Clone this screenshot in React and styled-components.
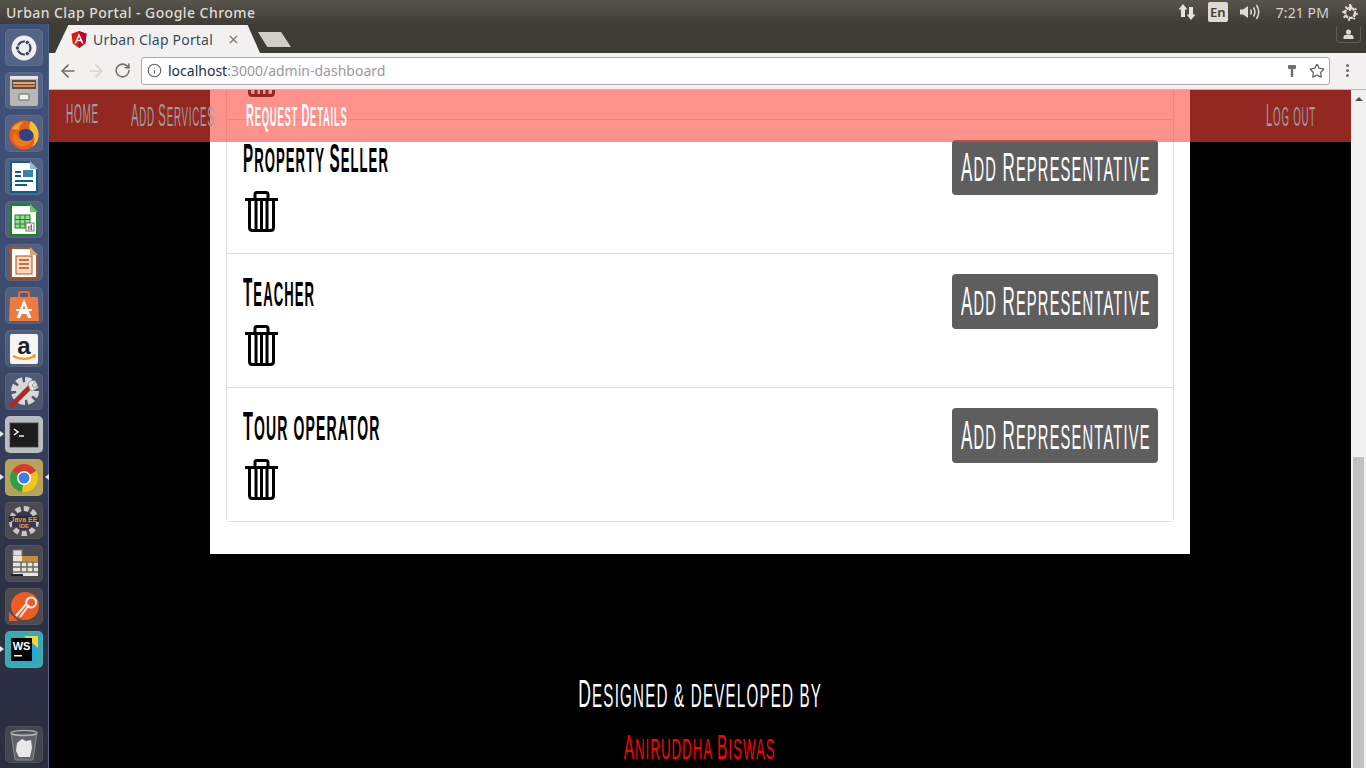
import React from "react";
import styled, { createGlobalStyle } from "styled-components";
import { ArrowLeft, ArrowRight, RotateCw, Info, Star, X } from "lucide-react";

const GlobalStyle = createGlobalStyle`
  html, body { margin: 0; padding: 0; height: 100%; overflow: hidden; background: #000; }
  #root { height: 100%; }
  * { box-sizing: border-box; }
`;

const Desktop = styled.div`
  width: 1366px;
  height: 768px;
  display: flex;
  flex-direction: column;
  overflow: hidden;
  font-family: "Noto Sans", sans-serif;
`;

const TopBar = styled.div`
  height: 24px;
  flex: none;
  display: flex;
  align-items: center;
  padding: 0 7px 0 6px;
  background: linear-gradient(#57544b, #3f3d37);
  color: #dfdbd2;
  font-size: 14px;
  font-weight: 500;
  letter-spacing: 0.44px;
`;

const TopTitle = styled.div`
  flex: 1;
  white-space: nowrap;
`;

const Tray = styled.div`
  display: flex;
  align-items: center;
  height: 24px;
  color: #dfdbd2;
`;

const EnBadge = styled.div`
  width: 20px;
  height: 20px;
  margin: 0 11px 0 12px;
  border-radius: 2px;
  background: #dfdbd2;
  color: #3f3d37;
  font-size: 13px;
  font-weight: 600;
  letter-spacing: 0;
  display: flex;
  align-items: center;
  justify-content: center;
`;

const Clock = styled.div`
  font-size: 14px;
  font-weight: 400;
  margin: 0 12px 0 15px;
  letter-spacing: 0.1px;
  white-space: nowrap;
  color: #d5d3cd;
`;

const Main = styled.div`
  flex: 1;
  min-height: 0;
  display: flex;
`;

const Launcher = styled.div`
  width: 49px;
  flex: none;
  padding: 5px 0 5px 5px;
  display: flex;
  flex-direction: column;
  gap: 6px;
  background: linear-gradient(#3f5279 0%, #3c4a6c 42%, #2e3246 72%, #2b2e3f 100%);
  border-right: 1px solid #4e6592;
`;

const Tile = styled.div`
  position: relative;
  width: 38px;
  height: 37px;
  flex: none;
  border-radius: 5px;
  display: flex;
  align-items: center;
  justify-content: center;
  background: ${(p) => p.$bg || "rgba(255,255,255,0.11)"};
  box-shadow: inset 0 0 0 1px rgba(255, 255, 255, 0.06);
  ${(p) => p.$running && `
    &::before {
      content: "";
      position: absolute;
      left: -5px;
      top: 15px;
      border: 3.5px solid transparent;
      border-left: 4px solid #dfe3ea;
    }
  `}
  ${(p) => p.$active && `
    &::after {
      content: "";
      position: absolute;
      right: -6px;
      top: 15px;
      border: 3.5px solid transparent;
      border-right: 4px solid #dfe3ea;
    }
  `}
`;

const Spacer = styled.div`
  flex: 1;
`;

const Browser = styled.div`
  flex: 1;
  min-width: 0;
  display: flex;
  flex-direction: column;
`;

const TabStrip = styled.div`
  height: 29px;
  flex: none;
  position: relative;
  display: flex;
  align-items: flex-end;
  padding-left: 6px;
  background: #3e3c36;
`;

const Tab = styled.div`
  width: 205px;
  height: 28px;
  flex: none;
  display: flex;
  align-items: center;
  padding: 0 20px 0 16px;
  background: #f2f1f0;
  clip-path: polygon(0 100%, 6.5% 0, 94% 0, 100% 100%);
  color: #3b4a5c;
  font-size: 14px;
  letter-spacing: 0.2px;
  gap: 6px;
`;

const TabTitle = styled.span`
  flex: 1;
  white-space: nowrap;
`;

const NewTab = styled.div`
  width: 33px;
  height: 15px;
  margin: 0 0 6px -2px;
  background: #cfcec9;
  clip-path: polygon(0 0, 70% 0, 100% 100%, 28% 100%);
`;

const UserChip = styled.div`
  position: absolute;
  top: 2px;
  right: 5px;
  width: 25px;
  height: 17px;
  border: 1px solid #5d5b54;
  border-top: none;
  border-radius: 0 0 4px 4px;
  display: flex;
  align-items: center;
  justify-content: center;
`;

const Toolbar = styled.div`
  height: 37px;
  flex: none;
  display: flex;
  align-items: center;
  padding: 0 0 1px 9px;
  gap: 8px;
  background: #f2f1f0;
  border-bottom: 1px solid #b8b8b8;
  color: #6e6e6e;
`;

const AddressBar = styled.div`
  width: 1189px;
  height: 28px;
  margin-left: 2px;
  display: flex;
  align-items: center;
  gap: 5px;
  padding: 0 4px 0 5px;
  background: #fff;
  border: 1px solid #a9a9a9;
  border-radius: 3px;
  font-size: 14px;
  color: #9a9a9a;
`;

const Host = styled.span`
  color: #20303f;
`;

const Url = styled.div`
  flex: 1;
  white-space: nowrap;
  padding-left: 1px;
`;

const Kebab = styled.div`
  width: 3px;
  margin-left: 8px;
  display: flex;
  flex-direction: column;
  gap: 2px;
  & > i {
    display: block;
    width: 3px;
    height: 3px;
    border-radius: 50%;
    background: #6e6e6e;
  }
`;

const Viewport = styled.div`
  flex: 1;
  min-height: 0;
  display: flex;
`;

const PageClip = styled.div`
  position: relative;
  flex: 1;
  min-width: 0;
  overflow: hidden;
  display: flex;
  flex-direction: column;
  justify-content: flex-end;
  background: #000;
`;

const NavBar = styled.nav`
  position: absolute;
  top: 0;
  left: 0;
  right: 0;
  height: 52px;
  z-index: 5;
  display: flex;
  align-items: center;
  padding: 0 35px 4px 17px;
  gap: 32px;
  background: rgba(251, 66, 56, 0.585);
`;

const NavLink = styled.div`
  width: ${(p) => p.$w}px;
  height: 28px;
  overflow: visible;
  color: ${(p) => (p.$on ? "#fff" : "#9d9d9d")};
  font-weight: ${(p) => (p.$on ? 700 : 400)};
  margin-left: ${(p) => (p.$right ? "auto" : 0)};
`;

const Panel = styled.div`
  width: 980px;
  flex: none;
  margin-left: 161px;
  padding: 0 16px 32px;
  background: #fff;
`;

const ServiceList = styled.div`
  border: 1px solid #ddd;
  border-radius: 0 0 4px 4px;
`;

const ServiceRow = styled.div`
  height: 134px;
  padding: 18px 15px 0 16px;
  display: flex;
  justify-content: space-between;
  align-items: flex-start;
  background: #fff;
  & + & { border-top: 1px solid #ddd; }
`;

const ServiceInfo = styled.div`
  display: flex;
  flex-direction: column;
`;

const ServiceName = styled.div`
  height: 32px;
  color: #000;
  font-weight: 700;
  margin-bottom: 21px;
`;

const TrashBtn = styled.div`
  width: 36px;
  height: 42px;
  margin-left: 2px;
  color: #000;
`;

const RepButton = styled.div`
  width: 206px;
  height: 55px;
  margin-top: 2px;
  display: flex;
  align-items: center;
  padding: 0 0 0 9px;
  background: #5e5e5e;
  border-radius: 4px;
  color: #fff;
`;

const Footer = styled.footer`
  height: 214px;
  flex: none;
  display: flex;
  flex-direction: column;
  align-items: center;
  padding-top: 120px;
`;

const Credit = styled.div`
  height: 32px;
  color: #fff;
  display: flex;
  justify-content: center;
`;

const Author = styled(Credit)`
  color: #f00;
  margin-top: 24px;
`;

const Scrollbar = styled.div`
  width: 15px;
  flex: none;
  position: relative;
  background: #f1f1f1;
  display: flex;
  flex-direction: column;
`;

const ScrollTrack = styled.div`
  flex: 1;
  display: flex;
  flex-direction: column;
  justify-content: flex-end;
  padding: 17px 2px 0;
`;

const ScrollThumb = styled.div`
  height: 311px;
  background: #c1c1c1;
`;

const ScrollUp = styled.div`
  position: absolute;
  top: 7px;
  left: 4px;
  border-left: 4px solid transparent;
  border-right: 4px solid transparent;
  border-bottom: 4px solid #505050;
`;

// Amatic look: tall narrow caps, squeezed from a narrow sans
const Squeeze = styled.span`
  display: inline-block;
  white-space: nowrap;
  font-family: "Liberation Sans Narrow", "Liberation Sans", sans-serif;
  font-size: ${(p) => p.$size}px;
  line-height: 1;
  letter-spacing: 0.08em;
  text-transform: uppercase;
  transform: scaleX(${(p) => p.$x});
  transform-origin: ${(p) => p.$origin || "left"} center;
`;

const Cap = styled.span`
  font-size: 1.16em;
`;

function Lettered({ text, size, x, origin }) {
  const parts = text.match(/[A-Z]?[^A-Z]*/g).filter(Boolean);
  return (
    <Squeeze $size={size} $x={x} $origin={origin}>
      {parts.map((part, i) => (
        <React.Fragment key={i}>
          {/[A-Z]/.test(part[0]) ? <Cap>{part[0]}</Cap> : part[0]}
          {part.slice(1)}
        </React.Fragment>
      ))}
    </Squeeze>
  );
}

const TrashIcon = () => (
  <svg width="36" height="42" viewBox="0 0 36 42" fill="none" stroke="currentColor" strokeWidth="3">
    <path d="M0 8.500h33" />
    <path d="M10 7V3.500Q10 1.500 12 1.500h9Q23 1.500 23 3.500V7" />
    <path d="M4.500 10v26.500q0 3 3 3h18q3 0 3-3V10" />
    <path d="M11 10v29M16.500 10v29M22 10v29" />
  </svg>
);

const AngularIcon = () => (
  <svg width="16" height="17" viewBox="0 0 16 17">
    <path d="M8 0 .5 2.700 1.700 12.600 8 17l6.300-4.400 1.200-9.900z" fill="#dd1b16" />
    <path d="M8 0v17l6.300-4.400 1.200-9.900z" fill="#c3002f" />
    <path d="M8 2.200 3.400 12.500h1.700l.9-2.300h4l.9 2.300h1.700zm1.300 6.600H6.700L8 5.700z" fill="#fff" />
  </svg>
);

const UbuntuIcon = () => (
  <svg width="30" height="30" viewBox="0 0 30 30">
    <circle cx="15" cy="15" r="12.500" fill="#eef0f5" />
    <circle cx="15" cy="15" r="6.500" fill="none" stroke="#38455f" strokeWidth="2.200" />
    <circle cx="8.500" cy="15" r="2.200" fill="#38455f" stroke="#eef0f5" />
    <circle cx="18.300" cy="9.400" r="2.200" fill="#38455f" stroke="#eef0f5" />
    <circle cx="18.300" cy="20.600" r="2.200" fill="#38455f" stroke="#eef0f5" />
  </svg>
);

const FilesIcon = () => (
  <svg width="30" height="32" viewBox="0 0 30 32">
    <rect x="1" y="1" width="28" height="30" rx="2" fill="#b9b7b3" />
    <rect x="1" y="1" width="28" height="3" fill="#e6e5e2" />
    <rect x="3" y="5" width="24" height="9" fill="#55504a" />
    <rect x="4" y="7" width="22" height="2" fill="#f3a268" />
    <rect x="4" y="10" width="22" height="2" fill="#e9824a" />
    <rect x="10" y="19" width="10" height="6" rx="1" fill="#eee" stroke="#666" />
  </svg>
);

const FirefoxIcon = () => (
  <svg width="32" height="32" viewBox="0 0 32 32">
    <circle cx="16" cy="17" r="14.500" fill="#e65d1c" />
    <path d="M23 3c6 4 9 11 7 18-1 3-3 6-6 8 4-6 3-13-2-17-1-3-1-6 1-9z" fill="#fbbf36" />
    <path d="M11 14c3-4 11-4 14 1 1 4-1 8-5 9-5 1-9-3-9-10z" fill="#2d4289" />
    <path d="M7 14c2 7 9 12 18 7-3 7-11 9-16 6-4-3-5-9-2-13z" fill="#f0791d" />
    <path d="M4 11c2-4 7-7 12-7-4 2-5 5-5 8-2-1-5 0-7-1z" fill="#f7a12a" />
  </svg>
);

const DocIcon = ({ color, fold, children }) => (
  <svg width="28" height="32" viewBox="0 0 28 32">
    <path d="M1 1h19l7 7v23H1z" fill="#fff" stroke={color} strokeWidth="2" />
    <path d="M20 0l8 8h-8z" fill={fold} />
    {children}
  </svg>
);

const WriterIcon = () => (
  <DocIcon color="#0f5f8c" fold="#8fbcd6">
    <rect x="5" y="10" width="6" height="2" fill="#0f5f8c" />
    <rect x="5" y="14" width="6" height="2" fill="#0f5f8c" />
    <rect x="13" y="9" width="10" height="7" fill="#3f7fae" />
    <rect x="5" y="19" width="18" height="2" fill="#0f5f8c" />
    <rect x="5" y="23" width="12" height="2" fill="#0f5f8c" />
  </DocIcon>
);

const CalcIcon = () => (
  <DocIcon color="#118a1e" fold="#6fc66f">
    <rect x="5" y="11" width="15" height="13" fill="#9bd89b" stroke="#118a1e" />
    <path d="M5 15.500h15M5 20h15M10 11v13M15 11v13" stroke="#118a1e" />
    <rect x="16" y="19" width="8" height="8" fill="#fff" stroke="#777" />
    <rect x="18" y="22" width="1.500" height="4" fill="#e2622a" />
    <rect x="20.500" y="20.500" width="1.500" height="5.500" fill="#3f7fae" />
  </DocIcon>
);

const ImpressIcon = () => (
  <DocIcon color="#b0501c" fold="#e0a27a">
    <rect x="6" y="9" width="16" height="18" fill="#f8d9c4" stroke="#b0501c" />
    <path d="M9 13h10M9 17h10M9 21h10" stroke="#b0501c" strokeWidth="1.600" />
  </DocIcon>
);

const StoreIcon = () => (
  <svg width="32" height="32" viewBox="0 0 32 32">
    <path d="M11 7V4q0-2 2-2h6q2 0 2 2v3" fill="none" stroke="#e9703a" strokeWidth="2" />
    <path d="M2 7h28l1 24H1z" fill="#ee7a3e" />
    <path d="M16 9 8.500 28h3.500l1.500-4h5l1.500 4h3.500zM14 21l2-6 2 6z" fill="#fff" />
    <rect x="8" y="19" width="16" height="2" fill="#fff" />
  </svg>
);

const AmazonIcon = () => (
  <svg width="32" height="32" viewBox="0 0 32 32">
    <rect x="2" y="1" width="28" height="30" rx="2" fill="#f5f5f5" />
    <text x="16" y="21" textAnchor="middle" fontFamily="Liberation Sans" fontWeight="700" fontSize="24" fill="#222">a</text>
    <path d="M5 23q11 6 22 0" fill="none" stroke="#f19a1a" strokeWidth="2" />
    <path d="M24 21.500l4 0-1 4z" fill="#f19a1a" />
  </svg>
);

const SettingsIcon = () => (
  <svg width="32" height="32" viewBox="0 0 32 32">
    <circle cx="17" cy="15" r="11" fill="none" stroke="#d8d8d8" strokeWidth="6" strokeDasharray="6 2.600" />
    <circle cx="17" cy="15" r="9" fill="#d8d8d8" />
    <path d="M4 29 22 11" stroke="#b4262a" strokeWidth="5" strokeLinecap="round" />
    <path d="M20 8a6 6 0 0 1 8-3l-4 4 2 3 4-3a6 6 0 0 1-8 5z" fill="#e6e6e6" stroke="#777" strokeWidth=".6" />
  </svg>
);

const TerminalIcon = () => (
  <svg width="30" height="26" viewBox="0 0 30 26">
    <rect x="0.500" y="0.500" width="29" height="25" rx="1" fill="#2b2b2b" stroke="#8a8a8a" />
    <rect x="2" y="2" width="26" height="22" fill="#1c1c1c" />
    <path d="M5 7l4 3-4 3" fill="none" stroke="#fff" strokeWidth="1.400" />
    <path d="M10 14h5" stroke="#fff" strokeWidth="1.400" />
  </svg>
);

const ChromeIcon = () => (
  <svg width="32" height="32" viewBox="0 0 32 32">
    <path d="M16 16 3.900 9A14 14 0 0 1 28.100 9z" fill="#d8382e" />
    <path d="M16 16 3.900 9A14 14 0 0 0 14 29.900z" fill="#2f9e44" />
    <path d="M16 16 14 29.900A14 14 0 0 0 28.100 9z" fill="#f5c518" />
    <circle cx="16" cy="16" r="7" fill="#fff" />
    <circle cx="16" cy="16" r="5.500" fill="#3f7ee8" />
  </svg>
);

const EclipseIcon = () => (
  <svg width="34" height="32" viewBox="0 0 34 32">
    <circle cx="17" cy="16" r="12" fill="none" stroke="#c8c8c8" strokeWidth="6" strokeDasharray="5 3" />
    <circle cx="17" cy="16" r="10" fill="#3b3350" />
    <rect x="2" y="11" width="30" height="6" fill="#2c2a35" />
    <rect x="5" y="17" width="24" height="5" fill="#3b3350" />
    <text x="17" y="16.500" textAnchor="middle" fontFamily="Liberation Sans" fontWeight="700" fontSize="7" fill="#e4a23a">Java EE</text>
    <text x="17" y="23" textAnchor="middle" fontFamily="Liberation Sans" fontWeight="700" fontSize="6" fill="#e4a23a">IDE</text>
  </svg>
);

const TableIcon = () => (
  <svg width="30" height="30" viewBox="0 0 30 30">
    <rect x="4" y="1" width="9" height="6" fill="#ddd" stroke="#777" />
    <rect x="4" y="7" width="25" height="20" fill="#e8e5da" />
    <rect x="13" y="7" width="16" height="5" fill="#c98a3a" />
    <path d="M4 13h25M4 18h25M4 23h25M12 13v10M18 13v10M24 13v10" stroke="#6b6b6b" strokeWidth="1.500" />
    <rect x="2" y="25" width="12" height="2" fill="#222" />
  </svg>
);

const PostmanIcon = () => (
  <svg width="32" height="32" viewBox="0 0 32 32">
    <circle cx="17" cy="15" r="14" fill="#ef5b25" />
    <path d="M1 30V21l9 9z" fill="#ef5b25" />
    <path d="M8 25 19 12M12 26l9-12M21 7a5 5 0 1 1 0 9 5 5 0 0 1 0-9z" fill="none" stroke="#eee" strokeWidth="2" />
  </svg>
);

const WebStormIcon = () => (
  <svg width="32" height="30" viewBox="0 0 32 30">
    <path d="M4 2h22l4 10-4 16H6z" fill="#27a7e0" />
    <path d="M16 1h14v12z" fill="#f5d33b" />
    <rect x="3" y="3" width="21" height="23" fill="#000" />
    <text x="13.500" y="15" textAnchor="middle" fontFamily="Liberation Sans" fontWeight="700" fontSize="11" fill="#fff">WS</text>
    <rect x="6" y="20" width="8" height="1.500" fill="#fff" />
  </svg>
);

const TrashCanIcon = () => (
  <svg width="30" height="32" viewBox="0 0 30 32">
    <ellipse cx="15" cy="4" rx="13" ry="2.500" fill="none" stroke="#a7a9ad" strokeWidth="1.400" />
    <path d="M2 4l4 26q0 1 1 1h16q1 0 1-1l4-26" fill="rgba(255,255,255,.16)" stroke="#8c8f96" />
    <path d="M8 14l5-4 4 2 5-1 1 8-2 9H10l-3-6z" fill="#e8e8e8" />
  </svg>
);

const NetworkIcon = () => (
  <svg width="18" height="18" viewBox="0 0 18 18" fill="#e6e3da">
    <path d="M5 1 9.500 6.500H7V14H3V6.500H.5z" />
    <path d="M13 17 8.500 11.500H11V4h4v7.500h2.500z" />
  </svg>
);

const VolumeIcon = () => (
  <svg width="22" height="18" viewBox="0 0 22 18" fill="none" stroke="#dfdbd2" strokeWidth="1.500">
    <path d="M1 6.500h3L9 3v12L4 11.500H1z" fill="#dfdbd2" stroke="none" />
    <path d="M11.500 6.500q1.500 2.500 0 5M14.500 4.500q3 4.500 0 9M17.500 2q4.500 7 0 14" />
  </svg>
);

const PowerIcon = () => (
  <svg width="18" height="18" viewBox="0 0 18 18" fill="none" stroke="#dfdbd2">
    <circle cx="9" cy="10" r="5" strokeWidth="2.500" strokeDasharray="4 .8" />
    <path d="M9 1v7" strokeWidth="2" />
    <circle cx="9" cy="10" r="7" strokeWidth="1.800" strokeDasharray="2 3.500" />
  </svg>
);

const UserIcon = () => (
  <svg width="11" height="10" viewBox="0 0 11 10" fill="#dcdad4">
    <circle cx="5.500" cy="3" r="2.500" />
    <path d="M.5 10V8q0-2 3-2.300h4q3 .3 3 2.300v2z" />
  </svg>
);

const KeyIcon = () => (
  <svg width="10" height="14" viewBox="0 0 10 14" fill="#6e6e6e">
    <rect x="1" y="1" width="8" height="4" rx="1" />
    <rect x="3.800" y="5" width="2.400" height="8" />
  </svg>
);

// first row is scrolled under the nav, only its trash icon shows
const services = [
  { name: "", x: 0.375 },
  { name: "Property Seller", x: 0.375 },
  { name: "Teacher", x: 0.375 },
  { name: "Tour operator", x: 0.4 },
];

export default function App() {
  return (
    <Desktop>
      <GlobalStyle />
      <TopBar>
        <TopTitle>Urban Clap Portal - Google Chrome</TopTitle>
        <Tray>
          <NetworkIcon />
          <EnBadge>En</EnBadge>
          <VolumeIcon />
          <Clock>7:21 PM</Clock>
          <PowerIcon />
        </Tray>
      </TopBar>
      <Main>
        <Launcher>
          <Tile><UbuntuIcon /></Tile>
          <Tile><FilesIcon /></Tile>
          <Tile><FirefoxIcon /></Tile>
          <Tile><WriterIcon /></Tile>
          <Tile><CalcIcon /></Tile>
          <Tile><ImpressIcon /></Tile>
          <Tile><StoreIcon /></Tile>
          <Tile><AmazonIcon /></Tile>
          <Tile><SettingsIcon /></Tile>
          <Tile $bg="#b9bcc0" $running><TerminalIcon /></Tile>
          <Tile $bg="#b5a35c" $running $active><ChromeIcon /></Tile>
          <Tile $bg="#4a4a50"><EclipseIcon /></Tile>
          <Tile $bg="#4a4b52"><TableIcon /></Tile>
          <Tile $bg="#4c4c50"><PostmanIcon /></Tile>
          <Tile $bg="#39aab0" $running><WebStormIcon /></Tile>
          <Spacer />
          <Tile $bg="#43454f"><TrashCanIcon /></Tile>
        </Launcher>
        <Browser>
          <TabStrip>
            <Tab>
              <AngularIcon />
              <TabTitle>Urban Clap Portal</TabTitle>
              <X size={13} color="#7a7a7a" strokeWidth={2.4} />
            </Tab>
            <NewTab />
            <UserChip><UserIcon /></UserChip>
          </TabStrip>
          <Toolbar>
            <ArrowLeft size={20} strokeWidth={2} />
            <ArrowRight size={20} strokeWidth={2} color="#d4d4d4" />
            <RotateCw size={17} strokeWidth={2.2} />
            <AddressBar>
              <Info size={15} strokeWidth={1.8} color="#5f5f5f" />
              <Url><Host>localhost</Host>:3000/admin-dashboard</Url>
              <KeyIcon />
              <Star size={16} strokeWidth={1.8} color="#5f5f5f" style={{ marginLeft: 7 }} />
            </AddressBar>
            <Kebab><i /><i /><i /></Kebab>
          </Toolbar>
          <Viewport>
            <PageClip>
              <NavBar>
                <NavLink $w={33}><Lettered text="HOME" size={24} x={0.36} /></NavLink>
                <NavLink $w={83}><Lettered text="Add Services" size={27} x={0.36} /></NavLink>
                <NavLink $w={101} $on><Lettered text="Request Details" size={27} x={0.35} /></NavLink>
                <NavLink $w={50} $right><Lettered text="Log out" size={27} x={0.36} /></NavLink>
              </NavBar>
              <Panel>
                <ServiceList>
                  {services.map(({ name, x }) => (
                    <ServiceRow key={name || "hidden"}>
                      <ServiceInfo>
                        <ServiceName>{name && <Lettered text={name} size={35} x={x} />}</ServiceName>
                        <TrashBtn><TrashIcon /></TrashBtn>
                      </ServiceInfo>
                      {name && <RepButton><Lettered text="Add Representative" size={35} x={0.42} /></RepButton>}
                    </ServiceRow>
                  ))}
                </ServiceList>
              </Panel>
              <Footer>
                <Credit><Lettered text="Designed & developed by" size={34} x={0.445} origin="center" /></Credit>
                <Author><Lettered text="Aniruddha Biswas" size={30} x={0.44} origin="center" /></Author>
              </Footer>
            </PageClip>
            <Scrollbar>
              <ScrollUp />
              <ScrollTrack><ScrollThumb /></ScrollTrack>
            </Scrollbar>
          </Viewport>
        </Browser>
      </Main>
    </Desktop>
  );
}
